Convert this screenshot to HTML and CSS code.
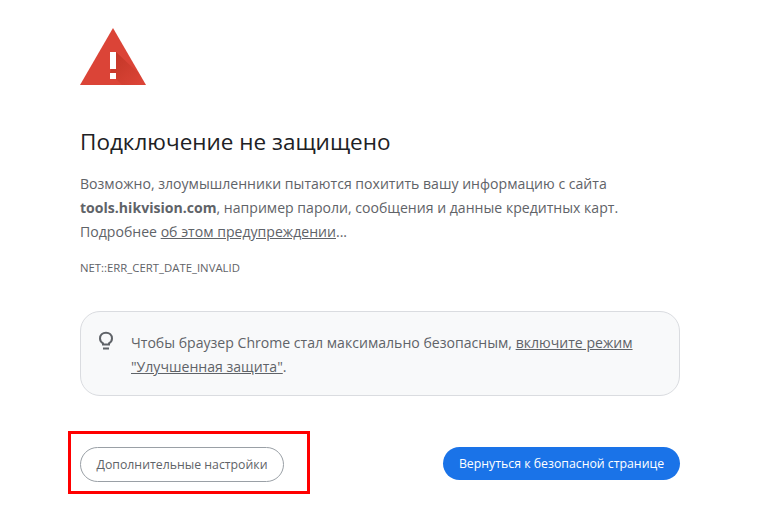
FILE: index.html
```html
<!DOCTYPE html>
<html lang="ru">
<head>
  <meta charset="UTF-8">
  <title>Подключение не защищено</title>
  <link rel="stylesheet" href="styles.css">
</head>
<body>

<main class="page">
  <svg class="warn-icon" width="66" height="58" viewBox="0 0 66 58">
    <defs>
      <linearGradient id="shade" x1="0.1" y1="0.1" x2="0.9" y2="0.9">
        <stop offset="0" stop-color="#a52714" stop-opacity="0.45"/>
        <stop offset="1" stop-color="#a52714" stop-opacity="0"/>
      </linearGradient>
    </defs>
    <polygon points="33,0 66,57 0,57" fill="#db4437"/>
    <polygon points="36,24 59.5,46 66,57 42,57 30,45" fill="url(#shade)"/>
    <rect x="30" y="24" width="6" height="17" fill="#fff"/>
    <rect x="30" y="45" width="6" height="6" fill="#fff"/>
  </svg>

  <h1 class="title">Подключение не защищено</h1>

  <p class="text">Возможно, злоумышленники пытаются похитить вашу информацию с сайта <strong>tools.hikvision.com</strong>, например пароли, сообщения и данные кредитных карт. Подробнее <a href="#">об этом предупреждении</a>...</p>

  <div class="error-code">NET::ERR_CERT_DATE_INVALID</div>

  <div class="hint">
    <svg class="hint-icon" width="18" height="20" viewBox="0 0 18 20" fill="none" stroke="#5f6368" stroke-width="2">
      <path d="M6 13.5v-1.2C4.2 11.2 3 9.6 3 7.4 3 4.1 5.6 1.7 9 1.7s6 2.4 6 5.7c0 2.2-1.2 3.8-3 4.9v1.2z"/>
      <path d="M6 17.5h6"/>
    </svg>
    <p class="hint-text">Чтобы браузер Chrome стал максимально безопасным, <a href="#">включите режим "Улучшенная защита"</a>.</p>
  </div>

  <div class="actions">
    <button type="button" class="button button-outline">Дополнительные настройки</button>
    <button type="button" class="button button-primary">Вернуться к безопасной странице</button>
  </div>
</main>

<div class="red-frame"></div>

</body>
</html>
```

FILE: styles.css
```css
html, body {
  margin: 0;
  background: #fff;
}
body {
  font-family: "Open Sans", "Noto Sans", sans-serif;
  color: #5f6368;
  overflow: hidden;
}
.page {
  width: 600px;
  padding: 28px 0 0 80px;
}
.warn-icon {
  display: block;
}
.title {
  margin: 41px 0 0;
  font-size: 22.5px;
  line-height: 29px;
  font-weight: 400;
  color: #202124;
}
.text {
  margin: 16px 0 0;
  font-size: 14.08px;
  line-height: 24px;
}
.text strong {
  color: #5f6368;
}
a {
  color: #5f6368;
}
.error-code {
  margin-top: 14px;
  font-size: 11.35px;
  line-height: 20px;
}
.hint {
  display: flex;
  gap: 16px;
  box-sizing: border-box;
  height: 85px;
  margin-top: 33px;
  padding: 19px 40px 0 16px;
  background: #f8f9fa;
  border: 1px solid #dadce0;
  border-radius: 20px;
}
.hint-icon {
  flex: none;
}
.hint-text {
  margin: 0;
  font-size: 14.08px;
  line-height: 24px;
}
.actions {
  display: flex;
  justify-content: space-between;
  align-items: flex-start;
  margin-top: 51px;
}
.button {
  font-family: inherit;
  font-size: 12.3px;
  border-radius: 18px;
}
.button-outline {
  width: 204px;
  height: 35px;
  background: #fff;
  border: 1px solid #9aa0a6;
  color: #5f6368;
}
.button-primary {
  width: 237px;
  height: 33px;
  background: #1a73e8;
  border: none;
  color: #fff;
}
.red-frame {
  position: absolute;
  left: 68px;
  top: 431px;
  width: 236px;
  height: 57px;
  border: 3px solid #f00;
}
```
